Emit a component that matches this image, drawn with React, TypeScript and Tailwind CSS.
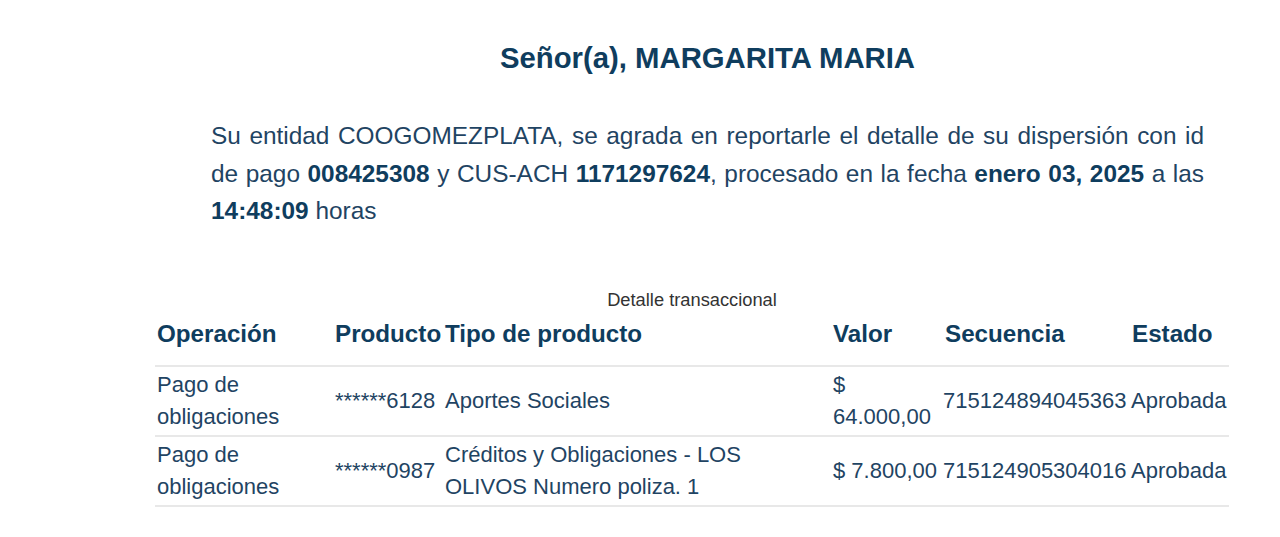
const rows = [
  {
    operacion: 'Pago de obligaciones',
    producto: '******6128',
    tipo: 'Aportes Sociales',
    valor: '$ 64.000,00',
    secuencia: '715124894045363',
    estado: 'Aprobada',
  },
  {
    operacion: 'Pago de obligaciones',
    producto: '******0987',
    tipo: 'Créditos y Obligaciones - LOS OLIVOS Numero poliza. 1',
    valor: '$ 7.800,00',
    secuencia: '715124905304016',
    estado: 'Aprobada',
  },
];

export default function App() {
  return (
    <div className="min-h-[537px] bg-white font-['Liberation_Sans',Arial,sans-serif] text-[#1f4463]">
      {/* Saludo */}
      <div className="ml-[211px] w-[993px] pt-[41px]">
        <h1 className="text-center text-[29.3px] leading-[34px] font-bold text-[#0f3d5e]">
          Señor(a), MARGARITA MARIA
        </h1>
        <p className="mt-[42px] text-justify text-[24.4px] leading-[37.5px]">
          Su entidad COOGOMEZPLATA, se agrada en reportarle el detalle de su dispersión con id de pago{' '}
          <b className="text-[#0f3d5e]">008425308</b> y CUS-ACH <b className="text-[#0f3d5e]">1171297624</b>, procesado
          en la fecha <b className="text-[#0f3d5e]">enero 03, 2025</b> a las <b className="text-[#0f3d5e]">14:48:09</b>{' '}
          horas
        </p>
      </div>

      {/* Detalle */}
      <table className="mt-[59px] ml-[155px] w-[1074px] table-fixed border-collapse text-[22px] leading-[32px]">
        <caption className="text-[18.3px] leading-[22px] text-[#333]">Detalle transaccional</caption>
        <colgroup>
          <col className="w-[178px]" />
          <col className="w-[110px]" />
          <col className="w-[388px]" />
          <col className="w-[110px]" />
          <col className="w-[188px]" />
          <col className="w-[100px]" />
        </colgroup>
        <thead>
          <tr className="border-b-2 border-[#e8e8e8] text-left text-[24.2px] font-bold text-[#0f3d5e]">
            <th className="pl-[2px] pt-[7px] pb-[15px]">Operación</th>
            <th className="pl-[2px] pt-[7px] pb-[15px]">Producto</th>
            <th className="pl-[2px] pt-[7px] pb-[15px]">Tipo de producto</th>
            <th className="pl-[2px] pt-[7px] pb-[15px]">Valor</th>
            <th className="pl-[4px] pt-[7px] pb-[15px]">Secuencia</th>
            <th className="pl-[3px] pt-[7px] pb-[15px]">Estado</th>
          </tr>
        </thead>
        <tbody>
          {rows.map((r) => (
            <tr key={r.producto} className="h-[70px] border-b-2 border-[#e8e8e8] align-middle">
              <td className="pl-[2px]">{r.operacion}</td>
              <td className="pl-[2px] whitespace-nowrap">{r.producto}</td>
              <td className="pl-[2px] pr-[8px]">{r.tipo}</td>
              <td className="pl-[2px]">{r.valor}</td>
              <td className="pl-[2px] whitespace-nowrap">{r.secuencia}</td>
              <td className="pl-[2px]">{r.estado}</td>
            </tr>
          ))}
        </tbody>
      </table>
    </div>
  );
}
